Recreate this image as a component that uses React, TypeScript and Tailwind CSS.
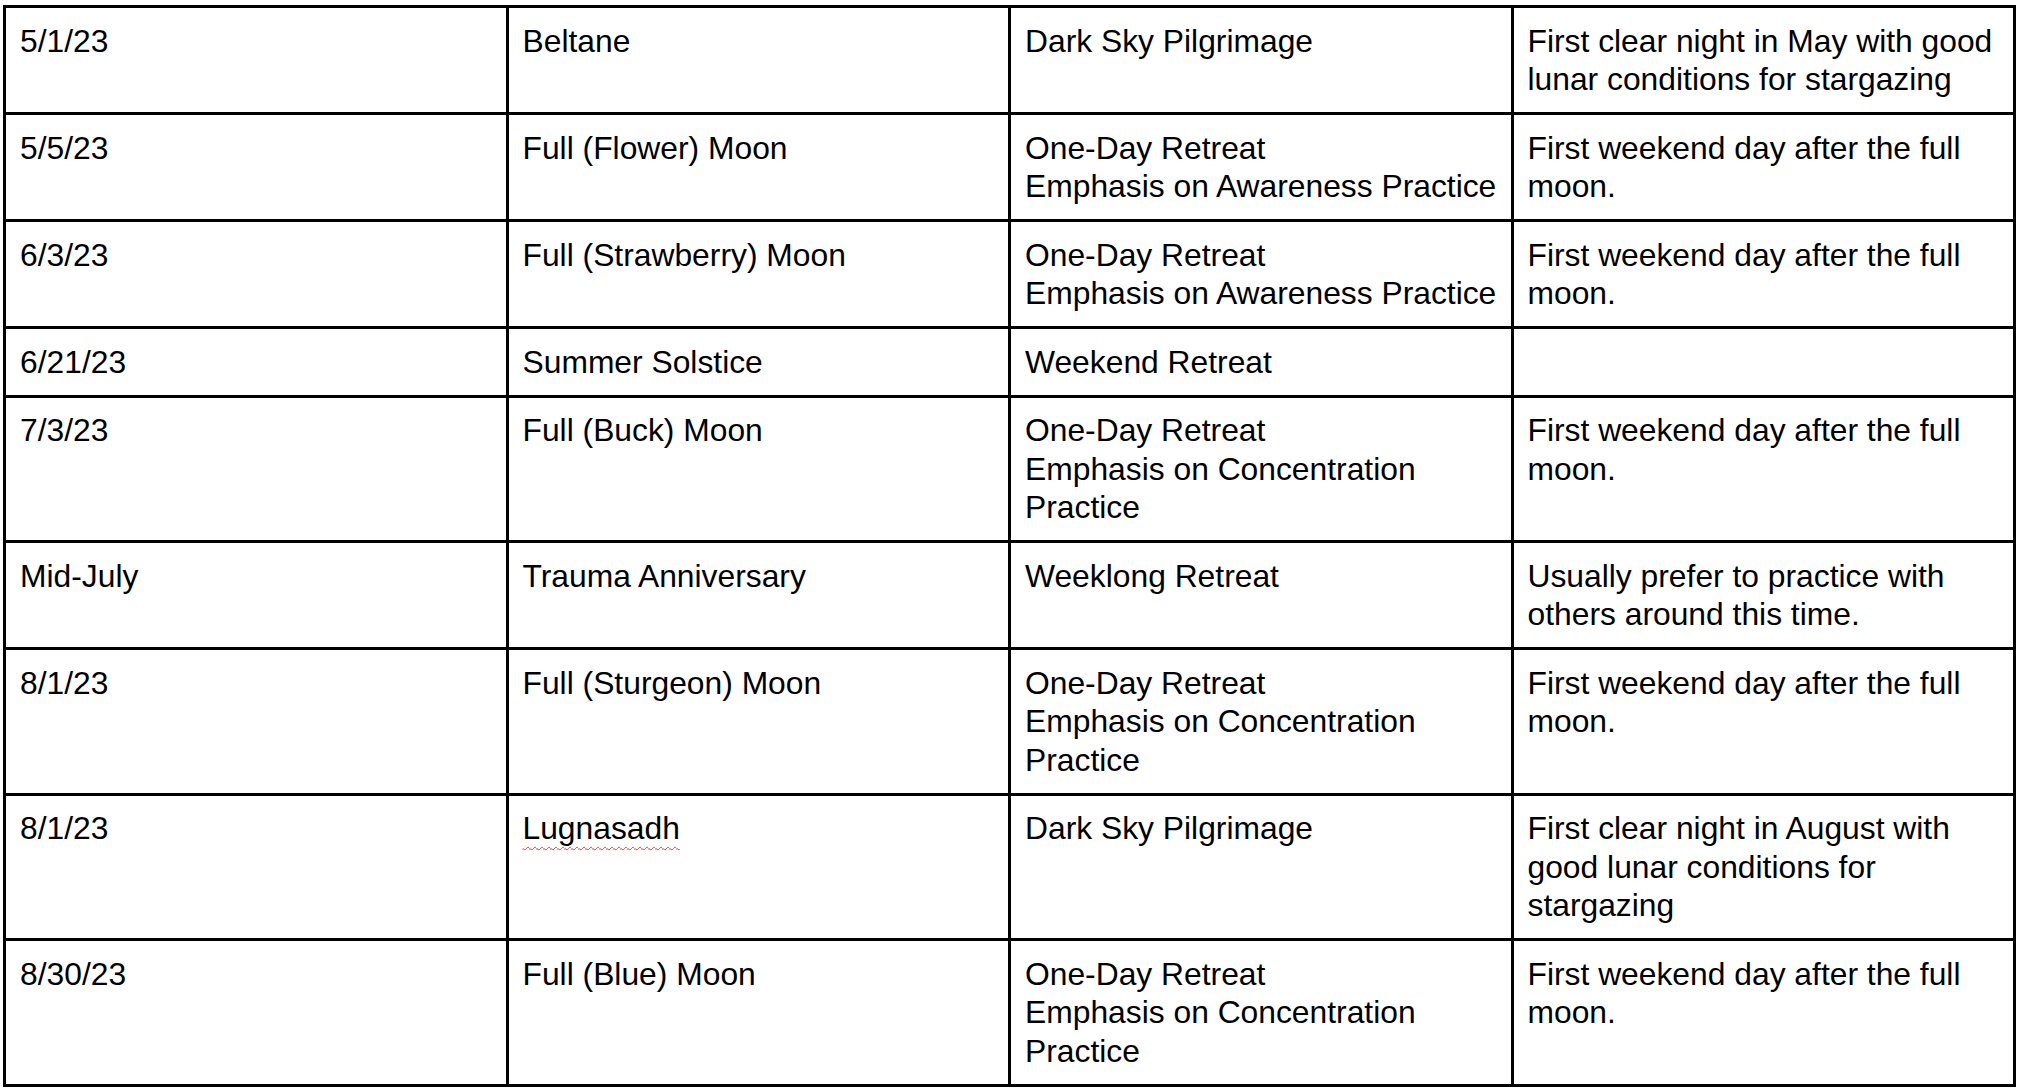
const rows: { date: string; occasion: string; event: string[]; note: string[]; misspelled?: boolean }[] = [
  {
    date: '5/1/23',
    occasion: 'Beltane',
    event: ['Dark Sky Pilgrimage'],
    note: ['First clear night in May with good', 'lunar conditions for stargazing'],
  },
  {
    date: '5/5/23',
    occasion: 'Full (Flower) Moon',
    event: ['One-Day Retreat', 'Emphasis on Awareness Practice'],
    note: ['First weekend day after the full', 'moon.'],
  },
  {
    date: '6/3/23',
    occasion: 'Full (Strawberry) Moon',
    event: ['One-Day Retreat', 'Emphasis on Awareness Practice'],
    note: ['First weekend day after the full', 'moon.'],
  },
  {
    date: '6/21/23',
    occasion: 'Summer Solstice',
    event: ['Weekend Retreat'],
    note: [],
  },
  {
    date: '7/3/23',
    occasion: 'Full (Buck) Moon',
    event: ['One-Day Retreat', 'Emphasis on Concentration', 'Practice'],
    note: ['First weekend day after the full', 'moon.'],
  },
  {
    date: 'Mid-July',
    occasion: 'Trauma Anniversary',
    event: ['Weeklong Retreat'],
    note: ['Usually prefer to practice with', 'others around this time.'],
  },
  {
    date: '8/1/23',
    occasion: 'Full (Sturgeon) Moon',
    event: ['One-Day Retreat', 'Emphasis on Concentration', 'Practice'],
    note: ['First weekend day after the full', 'moon.'],
  },
  {
    date: '8/1/23',
    occasion: 'Lugnasadh',
    misspelled: true,
    event: ['Dark Sky Pilgrimage'],
    note: ['First clear night in August with', 'good lunar conditions for', 'stargazing'],
  },
  {
    date: '8/30/23',
    occasion: 'Full (Blue) Moon',
    event: ['One-Day Retreat', 'Emphasis on Concentration', 'Practice'],
    note: ['First weekend day after the full', 'moon.'],
  },
];

function Lines({ lines }: { lines: string[] }) {
  return (
    <>
      {lines.map((line, i) => (
        <div key={i} className="whitespace-nowrap">
          {line}
        </div>
      ))}
    </>
  );
}

export default function App() {
  const cell = 'border-[3px] border-black pl-[14px] pr-[10px] py-[13.5px] align-top';

  return (
    <div className="min-h-screen bg-white pl-[3px] pt-[5px] font-['Liberation_Sans',Arial,sans-serif] text-[31.8px] leading-[38.5px] text-black">
      <table className="w-[2013px] table-fixed border-collapse">
        <tbody>
          {rows.map((row, i) => (
            <tr key={i}>
              <td className={cell}>
                <div className="whitespace-nowrap">{row.date}</div>
              </td>
              <td className={cell}>
                <div className="whitespace-nowrap">
                  {row.misspelled ? (
                    <span className="underline decoration-[#e53935] decoration-wavy decoration-[1px] underline-offset-[7px]">
                      {row.occasion}
                    </span>
                  ) : (
                    row.occasion
                  )}
                </div>
              </td>
              <td className={cell}>
                <Lines lines={row.event} />
              </td>
              <td className={cell}>
                <Lines lines={row.note} />
              </td>
            </tr>
          ))}
        </tbody>
      </table>
    </div>
  );
}
